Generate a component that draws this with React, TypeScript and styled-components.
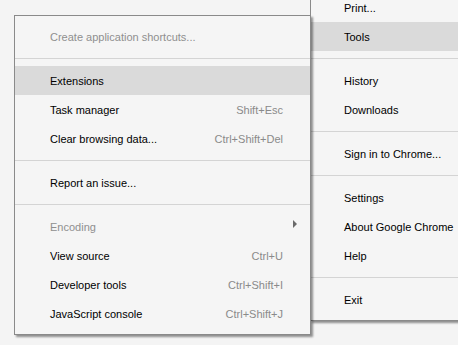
import React from "react";
import styled, { createGlobalStyle } from "styled-components";

const Global = createGlobalStyle`
  html, body { margin: 0; padding: 0; }
  body {
    background: #f4f4f4;
    overflow: hidden;
    width: 458px;
    height: 345px;
    font-family: "Liberation Sans", Arial, sans-serif;
    font-size: 11px;
  }
`;

const Stage = styled.div`
  display: flex;
  align-items: flex-start;
  width: 458px;
  height: 345px;
  overflow: hidden;
`;

const Menu = styled.div<{ $sub?: boolean }>`
  box-sizing: border-box;
  flex: none;
  background: #f5f5f5;
  border: 1px solid #8a8a8a;
  box-shadow: 2px 2px 2px rgba(0, 0, 0, 0.42);
  padding: 6px 0;
  position: relative;
  display: flex;
  flex-direction: column;
  ${(p) =>
    p.$sub
      ? `
    width: 297px;
    margin: 15px 0 0 14px;
    z-index: 2;
  `
      : `
    width: 170px;
    margin: -14px 0 0 -1px;
    z-index: 1;
  `}
`;

const Item = styled.div<{ $active?: boolean; $disabled?: boolean; $pl: number }>`
  height: 29px;
  display: flex;
  align-items: center;
  padding: 0 27px 0 ${(p) => p.$pl}px;
  background: ${(p) => (p.$active ? "#dadada" : "transparent")};
  color: ${(p) => (p.$disabled ? "#8f8f8f" : "#000")};
  white-space: nowrap;
`;

const Label = styled.span`
  flex: 1;
`;

const Accel = styled.span`
  color: #8a8a8a;
`;

const Arrow = styled.span`
  width: 0;
  height: 0;
  border-top: 4px solid transparent;
  border-bottom: 4px solid transparent;
  border-left: 4px solid #6a6a6a;
  margin-right: -14px;
  margin-top: -6px;
`;

const Sep = styled.div`
  height: 15px;
  display: flex;
  align-items: center;
  &::after {
    content: "";
    flex: 1;
    height: 1px;
    background: #d4d4d4;
  }
`;

type Entry =
  | { sep: true }
  | { label: string; accel?: string; active?: boolean; disabled?: boolean; sub?: boolean };

const subItems: Entry[] = [
  { label: "Create application shortcuts...", disabled: true },
  { sep: true },
  { label: "Extensions", active: true },
  { label: "Task manager", accel: "Shift+Esc" },
  { label: "Clear browsing data...", accel: "Ctrl+Shift+Del" },
  { sep: true },
  { label: "Report an issue..." },
  { sep: true },
  { label: "Encoding", disabled: true, sub: true },
  { label: "View source", accel: "Ctrl+U" },
  { label: "Developer tools", accel: "Ctrl+Shift+I" },
  { label: "JavaScript console", accel: "Ctrl+Shift+J" },
];

const mainItems: Entry[] = [
  { label: "Print..." },
  { label: "Tools", active: true },
  { sep: true },
  { label: "History" },
  { label: "Downloads" },
  { sep: true },
  { label: "Sign in to Chrome..." },
  { sep: true },
  { label: "Settings" },
  { label: "About Google Chrome" },
  { label: "Help" },
  { sep: true },
  { label: "Exit" },
];

function renderItems(items: Entry[], pl: number) {
  return items.map((it, i) =>
    "sep" in it ? (
      <Sep key={i} />
    ) : (
      <Item key={i} $pl={pl} $active={it.active} $disabled={it.disabled}>
        <Label>{it.label}</Label>
        {it.accel && <Accel>{it.accel}</Accel>}
        {it.sub && <Arrow />}
      </Item>
    )
  );
}

export default function App() {
  return (
    <>
      <Global />
      <Stage>
        <Menu $sub>{renderItems(subItems, 35)}</Menu>
        <Menu>{renderItems(mainItems, 33)}</Menu>
      </Stage>
    </>
  );
}
